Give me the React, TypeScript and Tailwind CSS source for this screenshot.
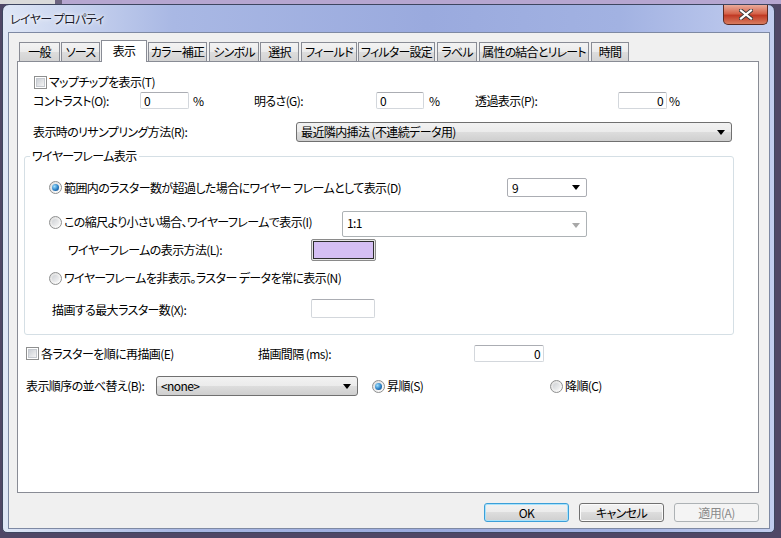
const tabs = [
  { label: "一般", w: 41, ml: 2 },
  { label: "ソース", w: 39, ml: 1 },
  { label: "表示", w: 46, ml: 1, active: true },
  { label: "カラー補正", w: 59, ml: 1 },
  { label: "シンボル", w: 50, ml: 2 },
  { label: "選択", w: 39, ml: 1 },
  { label: "フィールド", w: 56, ml: 2 },
  { label: "フィルター設定", w: 77, ml: 1 },
  { label: "ラベル", w: 40, ml: 2 },
  { label: "属性の結合とリレート", w: 110, ml: 2 },
  { label: "時間", w: 38, ml: 2 },
];

function Arrow({ disabled }: { disabled?: boolean }) {
  return (
    <svg width="8" height="5" viewBox="0 0 8 5" className="shrink-0">
      <path d="M0 0h8L4 5z" fill={disabled ? "#a8a8a8" : "#000"} />
    </svg>
  );
}

function Checkbox() {
  return (
    <div className="w-[13px] h-[13px] shrink-0 border border-[#8e8f8f] bg-white p-[1px]">
      <div className="w-full h-full border border-[#c6cad0] bg-[linear-gradient(135deg,#cbcfd5,#f4f4f4)]" />
    </div>
  );
}

function Radio({ checked }: { checked?: boolean }) {
  return (
    <div className="w-[13px] h-[13px] shrink-0 rounded-full border border-[#8e8f8f] bg-[linear-gradient(135deg,#dcdcdc,#ffffff)] flex items-center justify-center">
      {checked ? (
        <div className="w-[7px] h-[7px] rounded-full bg-[radial-gradient(circle_at_35%_35%,#9fe0ff,#2a7fc4_55%,#0d3e7a)]" />
      ) : (
        <div className="w-[7px] h-[7px] rounded-full bg-[linear-gradient(135deg,#cfd2d6,#f4f4f4)]" />
      )}
    </div>
  );
}

function TextBox({ w, h, value, right }: { w: number; h: number; value?: string; right?: boolean }) {
  return (
    <div
      className={`shrink-0 border border-[#d3d7dc] border-t-[#abadb3] rounded-[2px] bg-white flex items-center px-[3px] ${right ? "justify-end" : ""}`}
      style={{ width: w, height: h }}
    >
      {value}
    </div>
  );
}

function Combo({ w, h, value, kind }: { w: number; h: number; value: string; kind: "button" | "white" | "disabled" }) {
  const look =
    kind === "button"
      ? "border-[#707070] rounded-[3px] bg-[linear-gradient(#f2f2f2,#ebebeb_50%,#dddddd_50%,#cfcfcf)] items-center"
      : kind === "white"
      ? "border-[#abadb3] rounded-[2px] bg-white items-center"
      : "border-[#adb2b5] rounded-[2px] bg-white items-start pt-[3px]";
  return (
    <div className={`shrink-0 border flex justify-between pl-[4px] pr-[6px] ${look}`} style={{ width: w, height: h }}>
      <span>{value}</span>
      <div className={kind === "disabled" ? "self-center" : ""}>
        <Arrow disabled={kind === "disabled"} />
      </div>
    </div>
  );
}

function Button({ label, kind }: { label: string; kind: "default" | "normal" | "disabled" }) {
  const look =
    kind === "default"
      ? "border-[#3c9fd8] shadow-[inset_0_0_0_1px_#a8e2fb] bg-[linear-gradient(#f2f2f2,#ebebeb_50%,#dddddd_50%,#cfcfcf)] text-black"
      : kind === "normal"
      ? "border-[#707070] shadow-[inset_0_0_0_1px_#fbfbfb] bg-[linear-gradient(#f2f2f2,#ebebeb_50%,#dddddd_50%,#cfcfcf)] text-black"
      : "border-[#adb2b5] bg-[#f4f4f4] text-[#8a8a8a]";
  return (
    <div className={`w-[85px] h-[19px] border rounded-[3px] flex items-center justify-center ${look}`}>{label}</div>
  );
}

export default function App() {
  return (
    <div className="w-[781px] h-[538px] overflow-hidden bg-[#4f4766] font-['Noto_Sans_CJK_JP',sans-serif] text-[12px] leading-[16px] tracking-[-0.6px] whitespace-nowrap text-black [font-feature-settings:'palt']">
      <div className="h-[4px] flex">
        <div className="w-[55px] bg-[#dadada]" />
        <div className="w-[7px] bg-[#6d6480]" />
        <div className="flex-1 bg-[#b6a6d0]" />
      </div>
      <div className="flex pl-[2px]">
        <div className="relative w-[773px] h-[529px] border border-[#3e4660] rounded-t-[7px] rounded-b-[5px] bg-[linear-gradient(90deg,#dfe7f6_0%,#a9b8e4_22%,#9aaade_55%,#a2b2e2_80%,#c2cdef_100%)] flex flex-col px-[5px]">
          <div className="h-[27px] flex items-center pl-[2px] text-[12px] text-[#1a1a2a] [text-shadow:0_0_6px_#ffffff,0_0_3px_#ffffff]">
            レイヤー プロパティ
          </div>
          <div className="absolute left-[720px] top-[0px] w-[45px] h-[20px] rounded-b-[5px] border border-t-0 border-[#5b2a22] bg-[linear-gradient(#e9ab9c,#d5644b_45%,#c13a25_55%,#d87c60)] flex items-center justify-center">
            <svg width="14" height="11" viewBox="0 0 14 11">
              <path d="M2 1.5l10 8M12 1.5l-10 8" stroke="#3a3a3a" strokeWidth="4" strokeLinecap="square" />
              <path d="M2 1.5l10 8M12 1.5l-10 8" stroke="#ffffff" strokeWidth="2.2" strokeLinecap="square" />
            </svg>
          </div>
          <div className="w-[762px] h-[497px] border border-[#7e89a3] bg-[#f0f0f0] flex flex-col pl-[8px] pr-[10px] pt-[7px]">
            <div className="h-[21px] flex items-end">
              {tabs.map((t) =>
                t.active ? (
                  <div
                    key={t.label}
                    className="relative z-10 h-[22px] mb-[-1px] border border-b-0 border-[#898c95] bg-white flex items-center justify-center pb-[2px] shrink-0 tracking-[-0.8px]"
                    style={{ width: t.w, marginLeft: t.ml }}
                  >
                    {t.label}
                  </div>
                ) : (
                  <div
                    key={t.label}
                    className="h-[19px] border border-b-0 border-[#898c95] bg-[linear-gradient(#f3f3f3,#ebebeb_50%,#dddddd_50%,#d3d3d3)] flex items-center justify-center shrink-0 tracking-[-0.8px]"
                    style={{ width: t.w, marginLeft: t.ml }}
                  >
                    {t.label}
                  </div>
                )
              )}
            </div>
            <div className="w-[742px] h-[432px] border border-[#898c95] bg-white flex flex-col pt-[12px]">
              <div className="h-[16px] flex items-center ml-[16px]">
                <Checkbox />
                <span className="ml-[2px]">マップチップを表示(T)</span>
              </div>
              <div className="mt-[2px] h-[17px] flex items-center ml-[15px]">
                <span className="w-[107px]">コントラスト(O):</span>
                <TextBox w={49} h={17} value="0" />
                <span className="ml-[4px] w-[61px]">%</span>
                <span className="w-[122px]">明るさ(G):</span>
                <TextBox w={48} h={17} value="0" />
                <span className="ml-[5px] w-[46px]">%</span>
                <span className="w-[143px]">透過表示(P):</span>
                <TextBox w={49} h={17} value="0" right />
                <span className="ml-[2px]">%</span>
              </div>
              <div className="mt-[13px] h-[20px] flex items-center ml-[15px]">
                <span className="w-[263px]">表示時のリサンプリング方法(R):</span>
                <Combo w={436} h={20} value="最近隣内挿法 (不連続データ用)" kind="button" />
              </div>
              <div className="relative mt-[14px] ml-[6px] w-[710px] border border-[#d5dfe5] rounded-[3px] pt-[21px] pb-[16px] flex flex-col">
                <span className="absolute left-[5px] top-[-9px] px-[2px] bg-white">ワイヤーフレーム表示</span>
                <div className="h-[19px] flex items-center pl-[24px]">
                  <Radio checked />
                  <span className="ml-[2px] w-[443px]">範囲内のラスター数が超過した場合にワイヤー フレームとして表示(D)</span>
                  <Combo w={80} h={19} value="9" kind="white" />
                </div>
                <div className="mt-[14px] h-[26px] flex items-start pl-[24px]">
                  <div className="h-[22px] w-[293px] flex items-center">
                    <Radio />
                    <span className="ml-[2px]">この縮尺より小さい場合、ワイヤーフレームで表示(I)</span>
                  </div>
                  <Combo w={245} h={26} value="1:1" kind="disabled" />
                </div>
                <div className="mt-[2px] h-[22px] flex items-center pl-[43px]">
                  <span className="w-[243px]">ワイヤーフレームの表示方法(L):</span>
                  <div className="w-[65px] h-[22px] border border-[#8a8a8a] rounded-[2px] p-[1px] bg-[#e6e6e6]">
                    <div className="w-full h-full border border-[#2e2e2e] bg-[#d5bff3]" />
                  </div>
                </div>
                <div className="mt-[9px] h-[16px] flex items-center pl-[24px]">
                  <Radio />
                  <span className="ml-[2px]">ワイヤーフレームを非表示。ラスター データを常に表示(N)</span>
                </div>
                <div className="mt-[13px] h-[19px] flex items-start pl-[27px]">
                  <span className="w-[259px] mt-[3px]">描画する最大ラスター数(X):</span>
                  <TextBox w={64} h={19} />
                </div>
              </div>
              <div className="mt-[10px] h-[17px] flex items-center ml-[8px]">
                <div className="w-[232px] flex items-center">
                  <Checkbox />
                  <span className="ml-[2px]">各ラスターを順に再描画(E)</span>
                </div>
                <span className="w-[216px]">描画間隔 (ms):</span>
                <TextBox w={70} h={17} value="0" right />
              </div>
              <div className="mt-[14px] h-[20px] flex items-center ml-[8px]">
                <span className="w-[130px]">表示順序の並べ替え(B):</span>
                <Combo w={202} h={20} value="<none>" kind="button" />
                <div className="ml-[14px] w-[178px] flex items-center">
                  <Radio checked />
                  <span className="ml-[2px]">昇順(S)</span>
                </div>
                <Radio />
                <span className="ml-[2px]">降順(C)</span>
              </div>
            </div>
            <div className="mt-[10px] flex justify-end gap-[10px]">
              <Button label="OK" kind="default" />
              <Button label="キャンセル" kind="normal" />
              <Button label="適用(A)" kind="disabled" />
            </div>
          </div>
        </div>
      </div>
    </div>
  );
}
